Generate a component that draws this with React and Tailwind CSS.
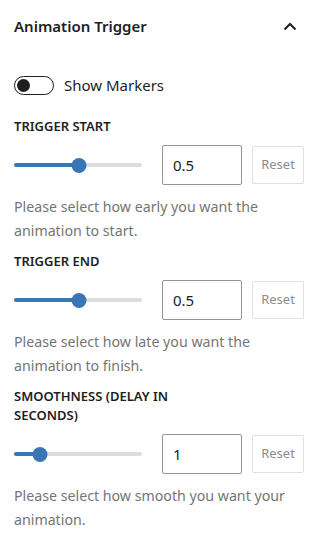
import React from "react";

function Slider({ pct }) {
  return (
    <div className="relative w-[128px] h-[14px] flex items-center">
      <div className="h-[4px] w-full rounded-full bg-[#dddddd]" />
      <div
        className="absolute left-0 h-[4px] rounded-full bg-[#3a76b6]"
        style={{ width: `${pct}%` }}
      />
      <div
        className="absolute w-[15px] h-[15px] rounded-full bg-[#3a76b6] -translate-x-1/2"
        style={{ left: `${pct}%` }}
      />
    </div>
  );
}

function Control({ label, value, pct, help }) {
  return (
    <div className="flex flex-col">
      <div className="text-[13px] leading-[19px] font-semibold uppercase text-[#1e1e1e] pr-[120px]">
        {label}
      </div>
      <div className="flex items-center mt-[9px]">
        <Slider pct={pct} />
        <div className="ml-[20px] w-[80px] h-[40px] border border-[#949494] rounded-[2px] flex items-center px-[10px] text-[15px] text-[#1e1e1e]">
          {value}
        </div>
        <div className="ml-[10px] w-[52px] h-[38px] border border-[#e0e0e0] rounded-[2px] flex items-center justify-center text-[13px] text-[#8c8c8c]">
          Reset
        </div>
      </div>
      <div className="mt-[10px] text-[14.2px] leading-[24px] text-[#757575]">
        {help}
      </div>
    </div>
  );
}

export default function App() {
  return (
    <div
      className="w-[323px] h-[542px] bg-white px-[14px] text-[#1e1e1e]"
      style={{ fontFamily: '"Noto Sans", "Open Sans", sans-serif' }}
    >
      <div className="flex items-center justify-between h-[52px] pr-[12px]">
        <div className="text-[15px] font-semibold">Animation Trigger</div>
        <svg width="14" height="9" viewBox="0 0 14 9" fill="none">
          <path d="M1.5 7.5 L7 2 L12.5 7.5" stroke="#1e1e1e" strokeWidth="2" />
        </svg>
      </div>
      <div className="flex items-center mt-[23px] h-[20px]">
        <div className="w-[40px] h-[19px] rounded-full border border-[#1e1e1e] relative">
          <div className="absolute left-[2px] top-[2px] w-[13px] h-[13px] rounded-full bg-[#1e1e1e]" />
        </div>
        <div className="ml-[10px] text-[15px]">Show Markers</div>
      </div>
      <div className="mt-[22px] flex flex-col gap-[9px]">
        <Control
          label="Trigger Start"
          value="0.5"
          pct={51}
          help="Please select how early you want the animation to start."
        />
        <Control
          label="Trigger End"
          value="0.5"
          pct={51}
          help="Please select how late you want the animation to finish."
        />
        <Control
          label="Smoothness (Delay in Seconds)"
          value="1"
          pct={20}
          help="Please select how smooth you want your animation."
        />
      </div>
    </div>
  );
}
